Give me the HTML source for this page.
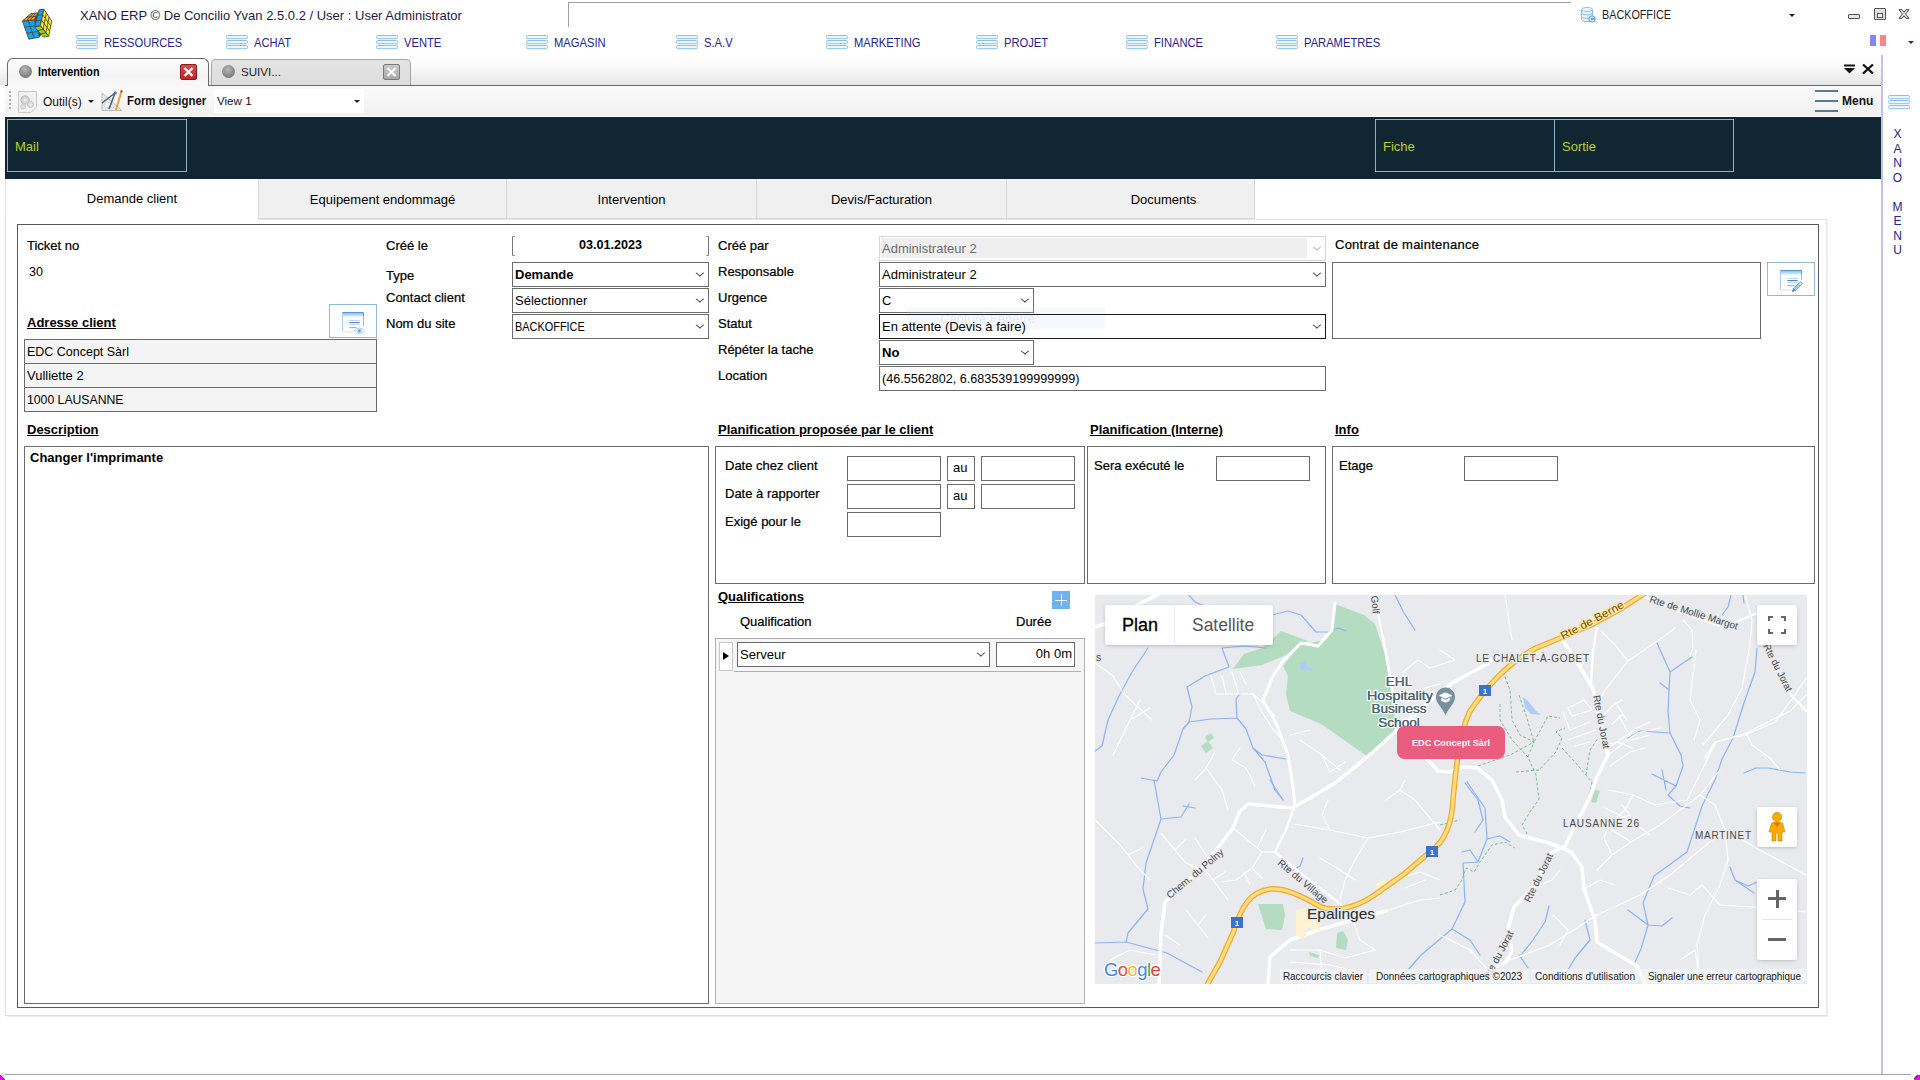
<!DOCTYPE html>
<html lang="fr">
<head>
<meta charset="utf-8">
<title>XANO ERP</title>
<style>
*{box-sizing:border-box;margin:0;padding:0}
html,body{width:1920px;height:1080px;overflow:hidden;background:#fff}
body{font-family:"Liberation Sans",sans-serif;font-size:13px;color:#000;position:relative}
.a{position:absolute;white-space:nowrap}
.t{position:absolute;white-space:nowrap;line-height:16px;height:16px}
.b{font-weight:bold}
.u{text-decoration:underline}
.sb{-webkit-text-stroke:.22px currentColor}
/* menu */
.mi{position:absolute;top:34px;height:17px;white-space:nowrap}
.mi svg{position:absolute;left:0;top:0}
.mi span{position:absolute;left:28px;top:0;line-height:17px;font-size:13.2px;color:#24248c;letter-spacing:-.2px}
/* fields */
.bx{position:absolute;border:1px solid #6b6b6b;background:#fff}
.sel{position:absolute;border:1px solid #6b6b6b;background:#fff;height:25px}
.sel i,.chev{position:absolute;right:5px;top:7px;width:5.8px;height:5.8px;border-right:1.1px solid #333;border-bottom:1.1px solid #333;transform:scaleY(.82) rotate(45deg);transform-origin:center}
.sel span,.bx span{position:absolute;left:2px;top:4px;transform-origin:0 50%;line-height:16px;white-space:nowrap}
.tab{position:absolute;top:179px;height:40px;background:#f0f0f0;border:1px solid #d8d8d8;border-top:none;text-align:center;line-height:42px}
</style>
</head>
<body>
<!-- ===== title bar ===== -->
<div class="a" id="titlebar" style="left:0;top:0;width:1920px;height:58px;background:#fff"></div>
<div class="t" style="left:80px;top:8px;font-size:13px;color:#1b1b46">XANO ERP © De Concilio Yvan 2.5.0.2 / User : User Administrator</div>
<div class="mi" style="left:76px"><svg width="23" height="16" viewBox="0 0 23 16"><g fill="#eef6fd" stroke="#8cc0ec" stroke-width="1"><rect x="0.5" y="1.5" width="21" height="3.2" rx="1.2"/><rect x="0.5" y="6.5" width="21" height="3.2" rx="1.2"/><rect x="0.5" y="11.5" width="21" height="3.2" rx="1.2"/></g></svg><span style="font-size:13px;letter-spacing:0;transform:scaleX(.86);transform-origin:0 0">RESSOURCES</span></div>
<div class="mi" style="left:226px"><svg width="23" height="16" viewBox="0 0 23 16"><g fill="#eef6fd" stroke="#8cc0ec" stroke-width="1"><rect x="0.5" y="1.5" width="21" height="3.2" rx="1.2"/><rect x="0.5" y="6.5" width="21" height="3.2" rx="1.2"/><rect x="0.5" y="11.5" width="21" height="3.2" rx="1.2"/></g></svg><span style="font-size:13px;letter-spacing:0;transform:scaleX(.86);transform-origin:0 0">ACHAT</span></div>
<div class="mi" style="left:376px"><svg width="23" height="16" viewBox="0 0 23 16"><g fill="#eef6fd" stroke="#8cc0ec" stroke-width="1"><rect x="0.5" y="1.5" width="21" height="3.2" rx="1.2"/><rect x="0.5" y="6.5" width="21" height="3.2" rx="1.2"/><rect x="0.5" y="11.5" width="21" height="3.2" rx="1.2"/></g></svg><span style="font-size:13px;letter-spacing:0;transform:scaleX(.86);transform-origin:0 0">VENTE</span></div>
<div class="mi" style="left:526px"><svg width="23" height="16" viewBox="0 0 23 16"><g fill="#eef6fd" stroke="#8cc0ec" stroke-width="1"><rect x="0.5" y="1.5" width="21" height="3.2" rx="1.2"/><rect x="0.5" y="6.5" width="21" height="3.2" rx="1.2"/><rect x="0.5" y="11.5" width="21" height="3.2" rx="1.2"/></g></svg><span style="font-size:13px;letter-spacing:0;transform:scaleX(.86);transform-origin:0 0">MAGASIN</span></div>
<div class="mi" style="left:676px"><svg width="23" height="16" viewBox="0 0 23 16"><g fill="#eef6fd" stroke="#8cc0ec" stroke-width="1"><rect x="0.5" y="1.5" width="21" height="3.2" rx="1.2"/><rect x="0.5" y="6.5" width="21" height="3.2" rx="1.2"/><rect x="0.5" y="11.5" width="21" height="3.2" rx="1.2"/></g></svg><span style="font-size:13px;letter-spacing:0;transform:scaleX(.86);transform-origin:0 0">S.A.V</span></div>
<div class="mi" style="left:826px"><svg width="23" height="16" viewBox="0 0 23 16"><g fill="#eef6fd" stroke="#8cc0ec" stroke-width="1"><rect x="0.5" y="1.5" width="21" height="3.2" rx="1.2"/><rect x="0.5" y="6.5" width="21" height="3.2" rx="1.2"/><rect x="0.5" y="11.5" width="21" height="3.2" rx="1.2"/></g></svg><span style="font-size:13px;letter-spacing:0;transform:scaleX(.86);transform-origin:0 0">MARKETING</span></div>
<div class="mi" style="left:976px"><svg width="23" height="16" viewBox="0 0 23 16"><g fill="#eef6fd" stroke="#8cc0ec" stroke-width="1"><rect x="0.5" y="1.5" width="21" height="3.2" rx="1.2"/><rect x="0.5" y="6.5" width="21" height="3.2" rx="1.2"/><rect x="0.5" y="11.5" width="21" height="3.2" rx="1.2"/></g></svg><span style="font-size:13px;letter-spacing:0;transform:scaleX(.86);transform-origin:0 0">PROJET</span></div>
<div class="mi" style="left:1126px"><svg width="23" height="16" viewBox="0 0 23 16"><g fill="#eef6fd" stroke="#8cc0ec" stroke-width="1"><rect x="0.5" y="1.5" width="21" height="3.2" rx="1.2"/><rect x="0.5" y="6.5" width="21" height="3.2" rx="1.2"/><rect x="0.5" y="11.5" width="21" height="3.2" rx="1.2"/></g></svg><span style="font-size:13px;letter-spacing:0;transform:scaleX(.86);transform-origin:0 0">FINANCE</span></div>
<div class="mi" style="left:1276px"><svg width="23" height="16" viewBox="0 0 23 16"><g fill="#eef6fd" stroke="#8cc0ec" stroke-width="1"><rect x="0.5" y="1.5" width="21" height="3.2" rx="1.2"/><rect x="0.5" y="6.5" width="21" height="3.2" rx="1.2"/><rect x="0.5" y="11.5" width="21" height="3.2" rx="1.2"/></g></svg><span style="font-size:13px;letter-spacing:0;transform:scaleX(.86);transform-origin:0 0">PARAMETRES</span></div>

<!-- cube logo -->
<svg class="a" style="left:14px;top:0px" width="50" height="46" viewBox="0 0 50 46">
 <polygon points="20.0,20.0 23.9,12.8 25.1,10.2 20.9,26.8 27.3,34.9 25.6,37.1" fill="#4a4644"/>
 <polygon points="8.5,21.3 20.0,20.0 25.6,37.1 14.9,39.2" fill="#12a5ee" stroke="#4a4644" stroke-width=".9" stroke-linejoin="round"/>
 <path d="M14.3,20.7 L20.2,38.1 M10.6,27.3 L21.9,25.7 M12.8,33.2 L23.7,31.4 " stroke="#4a4644" stroke-width=".9" fill="none"/>
 <polygon points="17.0,13.6 23.9,12.8 20.0,20.0 8.5,20.9" fill="#ff9a0a" stroke="#4a4644" stroke-width=".9" stroke-linejoin="round"/>
 <path d="M19.3,13.3 L12.4,20.6 M21.6,13.1 L16.2,20.3 M12.8,17.2 L21.9,16.4 " stroke="#4a4644" stroke-width=".9" fill="none"/>
 <polygon points="25.1,9.8 29.8,9.2 26.4,25.6 20.9,26.4" fill="#12a5ee" stroke="#4a4644" stroke-width=".9" stroke-linejoin="round"/>
 <path d="M23.7,15.3 L28.7,14.6 M22.3,20.9 L27.5,20.1 " stroke="#4a4644" stroke-width=".9" fill="none"/>
 <polygon points="29.8,9.2 37.7,20.9 34.7,36.2 26.4,25.6" fill="#fdf020" stroke="#4a4644" stroke-width=".9" stroke-linejoin="round"/>
 <path d="M32.4,13.1 L29.2,29.1 M35.1,17.0 L31.9,32.7 M28.7,14.6 L36.7,26.0 M27.5,20.1 L35.7,31.1 " stroke="#4a4644" stroke-width=".9" fill="none"/>
 <polygon points="20.9,27.3 26.4,26.0 34.7,36.2 29.4,37.1" fill="#9ad616" stroke="#4a4644" stroke-width=".9" stroke-linejoin="round"/>
 <path d="M23.7,30.5 L29.2,29.4 M26.5,33.8 L31.9,32.8 " stroke="#4a4644" stroke-width=".9" fill="none"/>
</svg>

<!-- BACKOFFICE selector -->
<svg class="a" style="left:1580px;top:6px" width="17" height="18" viewBox="0 0 17 18">
 <g fill="#eaf4fd" stroke="#8cc0ec" stroke-width="1">
  <path d="M1.5,3.5 C1.5,0.8 12.5,0.8 12.5,3.5 V13.5 C12.5,16.2 1.5,16.2 1.5,13.5 Z"/>
  <path d="M1.5,3.5 C1.5,6 12.5,6 12.5,3.5 M1.5,7 C1.5,9.5 12.5,9.5 12.5,7 M1.5,10.5 C1.5,13 12.5,13 12.5,10.5" fill="none"/>
 </g>
 <circle cx="12" cy="13" r="3.6" fill="#5aa5e8"/><path d="M13.6,11.8 A2,2 0 1 0 13.8,13.8" stroke="#fff" stroke-width="1.1" fill="none"/>
</svg>
<div class="t" style="left:1602px;top:7px;font-size:13px;color:#1b1b30;transform:scaleX(.83);transform-origin:0 50%">BACKOFFICE</div>
<div class="a" style="left:1789px;top:14px;border:3px solid transparent;border-top:3px solid #222;border-bottom:none"></div>
<!-- window controls -->
<div class="a" style="left:1848px;top:14px;width:12px;height:5px;border:1px solid #555;background:#e6e6e6;border-radius:1px"></div>
<div class="a" style="left:1874px;top:8px;width:12px;height:12px;border:1px solid #555;background:#ddd;border-radius:1px"></div>
<div class="a" style="left:1877px;top:13px;width:6px;height:5px;border:1px solid #555;background:#eee"></div>
<svg class="a" style="left:1898px;top:9px" width="12" height="10" viewBox="0 0 12 10"><path d="M1,.7 H4 L6,3.2 L8,.7 H11 L7.6,5 L11,9.3 H8 L6,6.8 L4,9.3 H1 L4.4,5 Z" fill="#e4e4e4" stroke="#444" stroke-width="1"/></svg>
<!-- flag -->
<div class="a" style="left:1870px;top:35px;width:16px;height:11px;background:linear-gradient(90deg,#8585f5 0 36%,#fdfdfd 36% 64%,#f98686 64% 100%)"></div>
<div class="a" style="left:1908px;top:41px;border:3px solid transparent;border-top:3px solid #24248c;border-bottom:none"></div>
<!-- empty box -->
<div class="a" style="left:568px;top:2px;width:1003px;height:25px;border-left:1px solid #a0a0a0;border-top:1px solid #a0a0a0"></div>

<!-- ===== tab strip ===== -->
<div class="a" style="left:0;top:58px;width:1881px;height:27px;background:linear-gradient(#ffffff 0%,#fbfbfb 30%,#e6e6e6 100%)"></div>
<div class="a" style="left:5px;top:85px;width:1876px;height:1px;background:#6a6a6a"></div>


<!-- doc tabs -->
<div class="a" style="left:7px;top:58px;width:202px;height:28px;border:1px solid #6a6a6a;border-bottom:none;border-radius:6px 6px 0 0;background:linear-gradient(#fdfdfd,#f4f4f4 60%,#f8f8f8)"></div>
<div class="a" style="left:211px;top:59px;width:200px;height:26px;border:1px solid #a5a5a5;border-bottom:none;border-radius:5px 5px 0 0;background:linear-gradient(#e4e4e4,#dcdcdc)"></div>
<div class="a" style="left:19px;top:65px;width:13px;height:13px;border-radius:50%;background:radial-gradient(circle at 45% 35%,#b8b8b8 0,#8a8a8a 55%,#5c5c5c 100%)"></div>
<div class="a" style="left:222px;top:65px;width:13px;height:13px;border-radius:50%;background:radial-gradient(circle at 45% 35%,#b8b8b8 0,#8a8a8a 55%,#5c5c5c 100%)"></div>
<div class="t b" style="left:38px;top:64px;font-size:12px;transform:scaleX(.895);transform-origin:0 50%">Intervention</div>
<div class="t" style="left:241px;top:64px;font-size:11.6px;color:#222">SUIVI...</div>
<div class="a" style="left:180px;top:64px;width:17px;height:16px;border:1px solid #8c1a1a;border-radius:2px;background:linear-gradient(#e04848,#c42424)"></div>
<svg class="a" style="left:183px;top:67px" width="11" height="10" viewBox="0 0 11 10"><path d="M1.5,1 L9.5,9 M9.5,1 L1.5,9" stroke="#fff" stroke-width="2.4"/></svg>
<div class="a" style="left:383px;top:64px;width:17px;height:16px;border:1px solid #7a7a7a;border-radius:2px;background:linear-gradient(#c8c8c8,#a8a8a8)"></div>
<svg class="a" style="left:386px;top:67px" width="11" height="10" viewBox="0 0 11 10"><path d="M1.5,1 L9.5,9 M9.5,1 L1.5,9" stroke="#fff" stroke-width="2.2"/></svg>
<!-- strip right controls -->
<svg class="a" style="left:1844px;top:64px" width="12" height="10" viewBox="0 0 12 10"><rect x="0" y="0.5" width="11" height="2" fill="#111"/><path d="M0,4 H11 L5.5,9.5 Z" fill="#111"/></svg>
<svg class="a" style="left:1862px;top:64px" width="12" height="10" viewBox="0 0 12 10"><path d="M1,0.5 L11,9.5 M11,0.5 L1,9.5" stroke="#111" stroke-width="2.2"/></svg>
<!-- ===== toolbar ===== -->
<div class="a" style="left:5px;top:86px;width:1876px;height:30px;background:linear-gradient(#f9f9f9,#f7f7f7 40%,#f1f1f1)"></div>


<!-- toolbar content -->
<div class="a" style="left:9px;top:91px;width:2px;height:18px;background:repeating-linear-gradient(#b0b0b0 0 2px,transparent 2px 4px)"></div>
<svg class="a" style="left:17px;top:90px" width="22" height="24" viewBox="0 0 22 24">
 <path d="M1.5,1.5 H19.5 V17 L14,22.5 H1.5 Z" fill="#f1f1f1" stroke="#c9c9c9"/>
 <circle cx="8" cy="10" r="4.2" fill="#d4d4d4" stroke="#bcbcbc"/><circle cx="8" cy="10" r="1.6" fill="#eee"/>
 <circle cx="13.5" cy="14.5" r="3" fill="#dcdcdc" stroke="#c4c4c4"/><circle cx="13.5" cy="14.5" r="1.1" fill="#eee"/>
 <circle cx="6" cy="16.5" r="2.4" fill="#e0e0e0" stroke="#c8c8c8"/>
</svg>
<div class="t" style="left:43px;top:94px;font-size:12px;color:#111">Outil(s)</div>
<div class="a" style="left:88px;top:100px;border:3px solid transparent;border-top:3px solid #222;border-bottom:none"></div>
<svg class="a" style="left:100px;top:89px" width="25" height="25" viewBox="0 0 25 25">
 <path d="M2,21.5 H22 L2,4 Z" fill="#e8e8e8" stroke="#bdbdbd"/>
 <path d="M5,18.5 H14 L5,10 Z" fill="#f8f8f8" stroke="#c8c8c8" stroke-width=".7"/>
 <path d="M2,14 L15,4 M15,4 L9,20" stroke="#4e5f74" stroke-width="1.5" fill="none"/>
 <circle cx="15.3" cy="3.8" r="1.5" fill="#3a7bd0"/>
 <path d="M21.5,2 L16,21" stroke="#e8a33a" stroke-width="2"/>
 <path d="M21.8,1.2 L21.2,3.4" stroke="#d04040" stroke-width="2"/>
</svg>
<div class="t b" style="left:127px;top:93px;font-size:12.4px;color:#111;transform:scaleX(.92);transform-origin:0 50%">Form designer</div>
<div class="a" style="left:214px;top:89px;width:150px;height:24px;background:#fff"></div>
<div class="t" style="left:217px;top:93px;font-size:11.6px;color:#111">View 1</div>
<div class="a" style="left:354px;top:100px;border:3px solid transparent;border-top:3px solid #222;border-bottom:none"></div>
<div class="a" style="left:1815px;top:90px;width:23px;height:2px;background:#5b7a90"></div>
<div class="a" style="left:1815px;top:100px;width:23px;height:2px;background:#5b7a90"></div>
<div class="a" style="left:1815px;top:110px;width:23px;height:2px;background:#5b7a90"></div>
<div class="t b" style="left:1842px;top:93px;font-size:12px;color:#111">Menu</div>
<!-- ===== dark band ===== -->
<div class="a" style="left:5px;top:117px;width:1876px;height:62px;background:#102733"></div>


<div class="a" style="left:7px;top:119px;width:180px;height:53px;border:1px solid #8fb2c8"></div>
<div class="a" style="left:1375px;top:119px;width:180px;height:53px;border:1px solid #8fb2c8"></div>
<div class="a" style="left:1554px;top:119px;width:180px;height:53px;border:1px solid #8fb2c8"></div>
<div class="t" style="left:15px;top:139px;color:#bccf2b">Mail</div>
<div class="t" style="left:1383px;top:139px;color:#bccf2b">Fiche</div>
<div class="t" style="left:1562px;top:139px;color:#bccf2b">Sortie</div>

<!-- ===== form tabs ===== -->
<div class="tab" style="left:258px;width:249px">Equipement endommagé</div>
<div class="tab" style="left:506px;width:251px">Intervention</div>
<div class="tab" style="left:756px;width:251px">Devis/Facturation</div>
<div class="tab" style="left:1006px;width:249px;padding-left:66px">Documents</div>
<!-- panel -->
<div class="a" style="left:5px;top:179px;width:1px;height:40px;background:#e2e2e2"></div>
<div class="a" style="left:5px;top:219px;width:1822px;height:797px;border:1px solid #dedede;border-top-color:#e6e6e6"></div>
<div class="a" style="left:6px;top:180px;width:252px;height:41px;background:#fff"></div>
<div class="t" style="left:6px;width:252px;text-align:center;top:191px">Demande client</div>
<div class="a" style="left:1826px;top:221px;width:2px;height:796px;background:linear-gradient(90deg,#e4e4e4,#f4f4f4)"></div><div class="a" style="left:7px;top:1016px;width:1821px;height:1px;background:#efefef"></div>
<div class="a" style="left:17px;top:224px;width:1802px;height:784px;border:1px solid #5a5a5a"></div>
<!-- FORM -->
<div class="t sb" style="left:27px;top:238px;">Ticket no</div>
<div class="t " style="left:29px;top:264px;font-size:12.5px">30</div>
<div class="t b u" style="left:27px;top:315px;">Adresse client</div>
<div class="a" style="left:329px;top:304px;width:48px;height:34px;border:1px solid #92b9dc;background:#fff"></div>
<svg class="a" style="left:341px;top:311px" width="26" height="25" viewBox="0 0 26 25">
 <defs><linearGradient id="hg1" x1="0" y1="0" x2="0" y2="1"><stop offset="0" stop-color="#8cc1f7"/><stop offset=".55" stop-color="#b9dafb"/><stop offset="1" stop-color="#fff"/></linearGradient></defs>
 <rect x="1.5" y="1.5" width="21" height="19.5" fill="#fff"/>
 <rect x="1.5" y="1.5" width="21" height="4.6" fill="url(#hg1)"/>
 <path d="M1.3,1.5 H22.7" stroke="#5c94d6" stroke-width="1.1"/>
 <path d="M1.5,2 V20.5" stroke="#a9cdf2"/>
 <path d="M22.5,2 V5.5" stroke="#5c94d6"/>
 <path d="M8.3,9.5 H18.7 M8.3,13.7 H18.7" stroke="#cdcbfa"/>
 <path d="M8.3,11.6 H18.7" stroke="#2f8fcb" stroke-width="1.1"/>
 <path d="M8.3,16.6 H15.5" stroke="#86c2b4" stroke-width="1.1"/>
 <path d="M5.5,9.5 h1 M5.5,13.7 h1 M5.5,16.6 h1" stroke="#e4e4e4"/><path d="M5.5,11.6 h1" stroke="#a8dcfa"/>
 <path d="M22.5,5.5 V15.5" stroke="#93c4c4"/>
 <path d="M1.8,21 H13" stroke="#e0e0e0"/>
 <path d="M13.2,19.8 Q18.4,14 23.6,19.8 Q18.4,25.4 13.2,19.8 Z" fill="#fff" stroke="#a6cdf4" stroke-width=".9"/>
 <circle cx="18.4" cy="19.8" r="2.5" fill="#b4d6f8"/><circle cx="18.4" cy="19.8" r="1.1" fill="#4a96e2"/>
</svg>
<div class="bx" style="left:24px;top:339px;width:353px;height:25px;background:#f4f4f4;"><span style="left:2px;top:4px;transform:scaleX(.96)">EDC Concept Sàrl</span></div>
<div class="bx" style="left:24px;top:363px;width:353px;height:25px;background:#f4f4f4;"><span style="left:2px;top:4px">Vulliette 2</span></div>
<div class="bx" style="left:24px;top:387px;width:353px;height:25px;background:#f4f4f4;"><span style="left:2px;top:4px;transform:scaleX(.94)">1000 LAUSANNE</span></div>
<div class="t b u" style="left:27px;top:422px;">Description</div>
<div class="bx" style="left:24px;top:446px;width:685px;height:558px;"><span style="font-weight:bold;left:5px;top:3px">Changer l'imprimante</span></div>
<div class="t sb" style="left:386px;top:238px;">Créé le</div>
<div class="t sb" style="left:386px;top:268px;">Type</div>
<div class="t sb" style="left:386px;top:290px;">Contact client</div>
<div class="t sb" style="left:386px;top:316px;">Nom du site</div>
<div class="a" style="left:512px;top:236px;width:197px;height:20px;border-left:1px solid #777;border-right:1px solid #777"></div>
<div class="a" style="left:512px;top:236px;width:3px;height:1px;background:#999"></div><div class="a" style="left:706px;top:236px;width:3px;height:1px;background:#999"></div>
<div class="a" style="left:512px;top:255px;width:3px;height:1px;background:#999"></div><div class="a" style="left:706px;top:255px;width:3px;height:1px;background:#999"></div>
<div class="t b" style="left:512px;width:197px;text-align:center;top:237px;font-size:12.6px">03.01.2023</div>
<div class="sel" style="left:512px;top:262px;width:197px;height:25px;border-color:#6b6b6b;"><span class="b" style="color:#000">Demande</span><i></i></div>
<div class="sel" style="left:512px;top:288px;width:197px;height:25px;border-color:#6b6b6b;"><span style="color:#000">Sélectionner</span><i></i></div>
<div class="sel" style="left:512px;top:314px;width:197px;height:25px;border-color:#6b6b6b;"><span style="color:#000;transform:scaleX(.84)">BACKOFFICE</span><i></i></div>
<div class="t sb" style="left:718px;top:238px;">Créé par</div>
<div class="t sb" style="left:718px;top:264px;">Responsable</div>
<div class="t sb" style="left:718px;top:290px;">Urgence</div>
<div class="t sb" style="left:718px;top:316px;">Statut</div>
<div class="t sb" style="left:718px;top:342px;">Répéter la tache</div>
<div class="t sb" style="left:718px;top:368px;">Location</div>
<div class="sel" style="left:879px;top:236px;width:447px;height:25px;border-color:#d6d6d6"><div class="a" style="left:1px;top:1px;width:426px;height:20px;background:#efefef"></div><span style="color:#6d6d6d">Administrateur 2</span><i style="border-color:#b0b0b0"></i></div>
<div class="sel" style="left:879px;top:262px;width:447px;height:25px;border-color:#6b6b6b;"><span style="color:#000">Administrateur 2</span><i></i></div>
<div class="sel" style="left:879px;top:288px;width:155px;height:25px;border-color:#6b6b6b;"><span style="color:#000">C</span><i></i></div>
<div class="a" style="left:907px;top:307px;width:198px;height:22px;background:rgba(190,215,245,.15)"></div><div class="t" style="left:940px;top:311px;color:rgba(120,140,170,.14)">Capture Fenêtre</div>
<div class="sel" style="left:879px;top:314px;width:447px;height:25px;border-color:#1a1a1a;background:transparent;"><span style="color:#000">En attente (Devis à faire)</span><i></i></div>
<div class="sel" style="left:879px;top:340px;width:155px;height:25px;border-color:#6b6b6b;"><span class="b" style="color:#000">No</span><i></i></div>
<div class="bx" style="left:879px;top:366px;width:447px;height:25px;"><span style="top:4px;font-size:12.6px">(46.5562802, 6.683539199999999)</span></div>
<div class="t sb" style="left:1335px;top:237px;letter-spacing:.25px">Contrat de maintenance</div>
<div class="bx" style="left:1332px;top:262px;width:429px;height:77px;"></div>
<div class="a" style="left:1767px;top:262px;width:48px;height:34px;border:1px solid #92b9dc;background:#fff"></div>
<svg class="a" style="left:1779px;top:269px" width="26" height="25" viewBox="0 0 26 25">
 <defs><linearGradient id="hg2" x1="0" y1="0" x2="0" y2="1"><stop offset="0" stop-color="#8cc1f7"/><stop offset=".55" stop-color="#b9dafb"/><stop offset="1" stop-color="#fff"/></linearGradient></defs>
 <rect x="1.5" y="1.5" width="21" height="19.5" fill="#fff"/>
 <rect x="1.5" y="1.5" width="21" height="4.6" fill="url(#hg2)"/>
 <path d="M1.3,1.5 H22.7" stroke="#5c94d6" stroke-width="1.1"/>
 <path d="M1.5,2 V20.5" stroke="#a9cdf2"/>
 <path d="M22.5,2 V5.5" stroke="#5c94d6"/>
 <path d="M8.3,9.5 H18.7 M8.3,13.7 H18.7" stroke="#cdcbfa"/>
 <path d="M8.3,11.6 H18.7" stroke="#2f8fcb" stroke-width="1.1"/>
 <path d="M8.3,16.6 H15.5" stroke="#86c2b4" stroke-width="1.1"/>
 <path d="M5.5,9.5 h1 M5.5,13.7 h1 M5.5,16.6 h1" stroke="#e4e4e4"/><path d="M5.5,11.6 h1" stroke="#a8dcfa"/>
 <path d="M22.5,5.5 V11" stroke="#93c4c4"/>
 <path d="M1.8,21 H12.5" stroke="#e0e0e0"/>
 <path d="M13.2,22.6 L14.6,19.2 L21.6,12.6 L23.6,14.6 L16.6,21.6 Z" fill="#a9cbf3" stroke="#4f8ad4" stroke-width=".7"/>
 <path d="M13.2,22.6 L14.6,19.2 L16.6,21.6 Z" fill="#4f8ad4"/>
 <path d="M16,20.6 L22.8,14" stroke="#8fc9bc" stroke-width=".8"/>
 <ellipse cx="21.3" cy="14.8" rx="1" ry=".6" transform="rotate(-45 21.3 14.8)" fill="#fff"/>
</svg>
<div class="t b u" style="left:718px;top:422px;">Planification proposée par le client</div>
<div class="bx" style="left:715px;top:446px;width:370px;height:138px;"></div>
<div class="t sb" style="left:725px;top:458px;">Date chez client</div>
<div class="t sb" style="left:725px;top:486px;">Date à rapporter</div>
<div class="t sb" style="left:725px;top:514px;">Exigé pour le</div>
<div class="bx" style="left:847px;top:456px;width:94px;height:25px;"></div>
<div class="bx" style="left:947px;top:456px;width:28px;height:25px;"><span style="left:5px;top:3px">au</span></div>
<div class="bx" style="left:981px;top:456px;width:94px;height:25px;"></div>
<div class="bx" style="left:847px;top:484px;width:94px;height:25px;"></div>
<div class="bx" style="left:947px;top:484px;width:28px;height:25px;"><span style="left:5px;top:3px">au</span></div>
<div class="bx" style="left:981px;top:484px;width:94px;height:25px;"></div>
<div class="bx" style="left:847px;top:512px;width:94px;height:25px;"></div>
<div class="t b u" style="left:1090px;top:422px;">Planification (Interne)</div>
<div class="bx" style="left:1087px;top:446px;width:239px;height:138px;"></div>
<div class="t sb" style="left:1094px;top:458px;">Sera exécuté le</div>
<div class="bx" style="left:1216px;top:456px;width:94px;height:25px;"></div>
<div class="t b u" style="left:1335px;top:422px;">Info</div>
<div class="bx" style="left:1332px;top:446px;width:483px;height:138px;"></div>
<div class="t sb" style="left:1339px;top:458px;">Etage</div>
<div class="bx" style="left:1464px;top:456px;width:94px;height:25px;"></div>
<div class="t b u" style="left:718px;top:589px;">Qualifications</div>
<div class="a" style="left:1052px;top:591px;width:18px;height:18px;background:#6db3f2"></div>
<div class="a" style="left:1055px;top:599.5px;width:12px;height:1px;background:#fff"></div><div class="a" style="left:1060.5px;top:594px;width:1px;height:12px;background:#fff"></div>
<div class="t " style="left:740px;top:614px;-webkit-text-stroke:.22px #000">Qualification</div>
<div class="t " style="left:1016px;top:614px;-webkit-text-stroke:.22px #000">Durée</div>
<div class="bx" style="left:715px;top:638px;width:370px;height:366px;background:#f5f5f5;border-color:#b0b0b4"></div>
<div class="a" style="left:719px;top:642px;width:14px;height:29px;background:#fff;border:1px solid #c8c8c8"></div>
<div class="a" style="left:723px;top:652px;border:4.5px solid transparent;border-left:6px solid #000;border-right:none"></div>
<div class="a" style="left:734px;top:671px;width:347px;height:1px;background:#b0b0b0"></div>
<div class="sel" style="left:737px;top:642px;width:253px;height:25px;border-color:#6b6b6b;"><span style="color:#000">Serveur</span><i></i></div>
<div class="bx" style="left:996px;top:642px;width:79px;height:25px;"><span style="left:auto;right:2px;top:3px">0h 0m</span></div>
<!-- MAP -->
<svg class="a" style="left:1095px;top:595px" width="712" height="389" viewBox="1095 595 712 389" font-family="Liberation Sans, sans-serif">
<rect x="1095" y="595" width="712" height="389" fill="#e8eaed"/>
<!-- green areas -->
<g fill="#b4dcc0">
<path d="M1335,604 L1364,615 L1375,624 L1384,652 L1391,689 L1396,730 L1367,756 L1321,724 L1290,711 L1286,694 L1288,676 L1283,666 L1299,646 L1327,639 L1334,619 Z"/>
<path d="M1281,631 L1308,641 L1299,646 L1286,655 L1262,665 L1233,669 L1244,654 L1262,648 L1277,635 Z"/>
<path d="M1205,737 l6,-4 l3,5 l-6,4 z M1201,746 l7,-5 l5,7 l-7,5 z"/>
<path d="M1258,904 L1283,904 L1285,915 L1282,930 L1266,929 Z"/>
<path d="M1337,933 L1343,931 L1348,940 L1346,950 L1336,948 Z"/>
<path d="M1309,952 L1319,955 L1318,958 L1310,956 Z"/>
<path d="M1595,790 l5,1 l-4,12 l-5,-1 z"/>
</g>
<!-- lakes -->
<g fill="#aecbfa"><path d="M1301,663 l4,-1 l2,4 l6,2 l-2,3 l-5,-2 l-4,3 l-2,-4 z"/><path d="M1523,697 l5,4 l8,10 l5,4 l-10,-1 l-6,-6 z"/></g>
<!-- streams -->
<g fill="none" stroke="#8ab4f8" stroke-width="1.2" stroke-linecap="round" stroke-linejoin="round">
<path d="M1189,595 L1195,602 L1202,605"/>
<path d="M1272,615 L1288,611 L1301,615 L1316,632 L1329,632 L1338,628 L1346,631"/>
<path d="M1266,648 L1245,646 L1222,648 L1229,667 L1205,676 L1187,687 L1192,707 L1189,722 L1183,729 L1174,755 L1161,772 L1157,781 L1141,778"/>
<path d="M1189,722 L1211,719 L1237,718 L1246,729 L1253,748 L1262,755 L1286,759 M1237,718 L1236,699 L1240,694 M1253,748 L1265,762 L1275,790 L1283,800"/>
<path d="M1148,648 L1132,672 L1119,696 L1108,720 L1102,746 L1095,751"/>
<path d="M1395,595 L1404,613 L1415,630"/>
<path d="M1154,780 L1161,819 L1146,863 L1143,889 L1148,909 L1128,933 L1126,942 L1095,943 M1126,942 L1167,953 L1202,972 M1161,819 L1181,817 L1189,804 M1183,806 L1195,808"/>
<path d="M1270,780 L1283,800 M1290,872 L1300,866 L1303,858"/>
<path d="M1467,782 L1485,808 L1487,839 L1500,836 L1510,842 M1487,839 L1478,862 L1463,863 L1465,902 L1452,929 L1421,955 L1408,970 M1478,862 L1470,850 L1462,852 M1452,929 L1470,940 L1480,955"/>
<path d="M1657,643 L1670,672 L1668,711 L1670,733 L1681,755 L1683,766 L1676,786 L1668,795 L1680,806 L1690,808 M1670,672 L1692,657 M1669,690 L1660,683 M1670,733 L1640,731 L1628,738 M1676,786 L1652,774 M1666,790 L1662,770"/>
<path d="M1731,595 L1728,607 L1722,615 M1743,595 L1744,603"/>
<path d="M1757,648 L1755,672 L1744,703 L1733,738 L1722,759 L1715,780 L1702,806 L1687,852 L1654,876 L1643,903 L1648,925 L1641,949 L1635,962 M1648,925 L1662,926 L1672,918 M1648,925 L1628,910"/>
<path d="M1744,773 L1756,768 L1768,768 L1790,772 L1805,773"/>
<path d="M1730,867 L1735,880 L1748,886 L1762,880 M1735,880 L1754,893"/>
<path d="M1549,906 L1545,922 L1533,940 L1521,955 M1519,955 L1528,968 M1585,920 L1590,940 L1575,958 L1565,975"/>
<path d="M1465,783 L1478,800 L1483,820 L1475,832"/>
</g>
<!-- green trails -->
<g fill="none" stroke="#7cc28f" stroke-width="1" stroke-dasharray="3 2">
<path d="M1500,704 L1500,720 L1512,740 L1528,757 L1536,775 L1539,799 L1530,812 L1522,825 L1528,835"/>
<path d="M1503,672 L1510,690 L1512,720 L1520,735 L1534,742 L1528,757 M1519,695 L1526,715 L1534,742 L1548,716 L1560,718"/>
<path d="M1478,766 L1510,755 L1534,742 M1516,772 L1539,770 L1556,752 L1562,738 L1556,732 L1565,728"/>
<path d="M1562,748 L1575,762 L1586,775 L1592,782 L1588,800 M1586,775 L1590,750 L1598,738"/>
<path d="M1440,825 L1460,820 M1440,895 L1455,890 L1462,880 L1466,868 L1474,872 L1480,862 L1492,845 L1505,842 L1515,848"/>
</g>
<!-- thin white roads -->
<g fill="none" stroke="#fff" stroke-width="1.2" stroke-linecap="round" stroke-linejoin="round">
<path d="M1095,663 L1113,676 L1124,694 L1152,720 M1113,755 L1130,720 L1140,700 M1130,720 L1150,708"/>
<path d="M1211,676 L1216,694 L1253,694 L1262,702 M1222,676 L1226,693 M1232,672 L1238,692 M1253,694 L1262,712 L1272,728 L1284,742 M1240,672 L1246,684"/>
<path d="M1195,780 L1206,768 L1215,752 M1206,768 L1222,790 L1228,810 M1240,748 L1232,760 L1246,768 L1255,786 M1262,702 L1275,716"/>
<path d="M1300,740 L1322,755 L1340,770 M1322,755 L1330,772 L1345,762 M1290,735 L1310,730"/>
<path d="M1397,711 L1410,700 L1425,688 L1440,684 M1430,668 L1455,660 L1440,650 M1403,672 L1418,660 L1430,668"/>
<path d="M1505,595 L1512,640 M1593,652 L1580,667 M1602,632 L1615,645 L1628,661 L1663,637 L1675,628 M1628,661 L1605,690 L1600,700 M1619,716 L1630,736 M1612,724 L1622,715"/>
<path d="M1563,712 L1570,730 L1590,722 M1568,740 L1596,730 M1572,716 L1592,710 L1584,700 L1568,708 Z M1575,746 L1590,742"/>
<path d="M1608,755 L1637,733 L1660,728 M1610,766 L1630,752 L1645,748"/>
<path d="M1694,786 L1716,742 L1746,733 L1790,711 L1806,695 M1716,742 L1706,760 M1746,733 L1752,745 L1770,758 L1780,770"/>
<path d="M1764,643 L1775,640 L1790,630 M1696,650 L1690,700 L1700,720 L1694,740"/>
<path d="M1608,790 L1633,795 L1655,805 L1687,800 L1694,786 M1633,795 L1625,810 L1612,822 M1605,808 L1630,820 L1650,835"/>
<path d="M1597,870 L1612,855 L1631,842 L1660,825 L1700,795 L1720,770 M1612,855 L1604,838 L1610,822 L1630,815 L1622,805 M1631,842 L1612,830"/>
<path d="M1597,915 L1640,895 L1670,875 L1700,850 L1725,830 M1553,915 L1568,930 L1560,945 M1668,888 L1690,895 L1702,885 L1720,905 L1770,908 L1806,912"/>
<path d="M1725,830 L1728,860 L1720,885 L1705,915 L1697,945 L1700,983 M1700,983 L1695,950 L1680,960 M1725,830 L1715,805 L1700,795 M1725,830 L1760,850 L1806,875"/>
<path d="M1510,960 L1550,945 L1597,915 M1440,935 L1470,950 L1490,972"/>
<path d="M1161,833 L1175,850 L1185,862 L1200,870 M1175,850 L1185,840 M1195,838 L1208,858 M1203,867 L1213,880 L1228,900 M1213,880 L1225,872"/>
<path d="M1233,828 L1262,852 L1275,852 M1262,852 L1252,868 L1236,880 L1222,882 M1252,868 L1262,878 M1244,873 L1250,884 M1266,830 L1258,846"/>
<path d="M1294,824 L1330,830 L1368,838 L1400,832 L1440,822 M1368,838 L1355,860 L1345,880 L1340,900 M1330,830 L1322,815 L1328,800"/>
<path d="M1386,800 L1400,790 L1415,800 L1440,830 M1400,790 L1405,780 M1320,858 L1340,870 L1355,880"/>
<path d="M1395,880 L1420,872 L1440,880 M1405,888 L1425,880 M1386,911 L1420,900 L1440,898 M1353,920 L1360,940 L1375,950"/>
<path d="M1290,950 L1320,950 L1345,958 L1375,950 M1290,962 L1330,965 L1370,975 M1320,950 L1322,975"/>
<path d="M1095,820 L1120,845 L1140,870 L1150,880 M1128,855 L1142,848 M1110,960 L1130,950 L1155,955"/>
<path d="M1186,910 L1198,925 L1208,938 M1198,925 L1206,915 M1165,935 L1180,945"/>
<path d="M1540,885 L1552,880 L1560,870 M1584,889 L1600,880 L1615,885"/>
</g>
<path fill="none" stroke="#fff" stroke-width="1.2" stroke-linecap="round" stroke-linejoin="round" d="M1611,746 L1637,728 L1650,722 M1703,745 L1728,715 L1742,688 L1750,645 L1752,620 L1745,595 M1705,758 L1715,742 L1745,735 L1775,722 L1795,695 L1806,678 M1683,620 L1692,630 L1693,648 L1690,655"/>
<path fill="none" stroke="#fff" stroke-width="1.2" stroke-linecap="round" stroke-linejoin="round" d="M1597,722 L1612,706 L1622,700 M1617,705 L1627,720 M1632,740 L1650,735 M1605,745 L1618,742 L1632,748"/>
<!-- medium white roads -->
<g fill="none" stroke="#fff" stroke-width="2.4" stroke-linecap="round" stroke-linejoin="round">
<path d="M1375,595 L1380,624 L1386,652 L1391,685 L1397,711"/>
<path d="M1597,626 L1593,652 L1591,685"/>
<path d="M1642,596 L1680,612 L1724,627 L1755,614 L1770,608"/>
<path d="M1764,643 L1790,694 L1806,711"/>
<path d="M1294,808 L1286,830 L1275,852 L1299,872 L1338,902 L1348,912"/>
</g>
<!-- thick white roads -->
<g fill="none" stroke="#fff" stroke-width="3.6" stroke-linecap="round" stroke-linejoin="round">
<path d="M1095,627 L1108,623 L1139,604 L1157,595"/>
<path d="M1335,603 L1332,630 L1318,646 L1301,643 L1283,661 L1272,678 L1263,700 L1277,725 L1288,755 L1293,787 L1295,806" stroke-width="3"/>
<path d="M1159,984 L1161,933 L1165,902 L1203,867 L1233,828 L1240,811 L1248,804 L1270,806 L1292,808 L1310,798 L1335,783 L1355,767 L1372,753 L1397,730 L1428,703 L1452,683 L1485,665 L1500,654"/>
<path d="M1562,639 L1580,667 L1593,689 L1600,722 L1608,755 L1597,777 L1589,799 L1576,824 L1565,846 L1549,854 L1536,885 L1514,907 L1508,929 L1512,951 L1506,962 L1484,973"/>
<path d="M1425,757 L1438,771 L1450,772 L1463,767 L1477,768 L1492,780 L1502,800 L1505,817 L1519,835 L1549,843 L1571,852 L1582,867 L1584,889 L1595,920 L1597,942 L1637,966 L1645,984"/>
<path d="M1268,984 L1270,957 L1290,940 L1321,929 L1353,920 L1386,911"/>
</g>
<!-- Epalinges yellow blocks -->
<g fill="#fdf3d2"><path d="M1296,910 l9,-2 l3,10 l14,4 l-2,8 l-12,-2 l-3,10 l-9,-2 z"/><path d="M1375,885 l8,-6 l6,6 l-8,6 z"/></g>
<!-- highway -->
<path id="hw" d="M1645,593 L1622,608 L1593,624 L1558,639 L1536,648 C1506,664 1486,688 1470,711 C1459,735 1457,760 1453,799 C1452,830 1440,845 1430,852 L1404,874 L1373,896 C1355,908 1335,912 1321,907 C1300,895 1285,888 1270,889 C1250,892 1242,905 1233,933 L1220,962 L1207,985" fill="none" stroke="#f2a92c" stroke-width="5.6"/>
<path d="M1645,593 L1622,608 L1593,624 L1558,639 L1536,648 C1506,664 1486,688 1470,711 C1459,735 1457,760 1453,799 C1452,830 1440,845 1430,852 L1404,874 L1373,896 C1355,908 1335,912 1321,907 C1300,895 1285,888 1270,889 C1250,892 1242,905 1233,933 L1220,962 L1207,985" fill="none" stroke="#fcdc7e" stroke-width="3.2"/>
<!-- shields -->
<g font-size="8" font-weight="bold" fill="#fff" text-anchor="middle">
<rect x="1479" y="685" width="12" height="11" fill="#3a74c8"/><text x="1485" y="694">1</text>
<rect x="1426" y="846" width="12" height="11" fill="#3a74c8"/><text x="1432" y="855">1</text>
<rect x="1231" y="917" width="12" height="11" fill="#3a74c8"/><text x="1237" y="926">1</text>
</g>
<!-- labels -->
<g font-size="10" fill="#4a4a4a" stroke="#e8eaed" stroke-width="2.5" paint-order="stroke" stroke-linejoin="round">
<text transform="translate(1371,596) rotate(84)" textLength="18" lengthAdjust="spacingAndGlyphs">Golf</text>
<text transform="translate(1649,602) rotate(17.5)" textLength="92" lengthAdjust="spacingAndGlyphs">Rte de Mollie Margot</text>
<text transform="translate(1593,696) rotate(79)" textLength="54" lengthAdjust="spacingAndGlyphs">Rte du Jorat</text>
<text transform="translate(1763,646) rotate(63)" textLength="52" lengthAdjust="spacingAndGlyphs">Rte du Jorat</text>
<text transform="translate(1530,903) rotate(-64)" textLength="53" lengthAdjust="spacingAndGlyphs">Rte du Jorat</text>
<text transform="translate(1489,980) rotate(-62)" textLength="53" lengthAdjust="spacingAndGlyphs">Rte du Jorat</text>
<text transform="translate(1170,899) rotate(-40)" textLength="71" lengthAdjust="spacingAndGlyphs">Chem. du Polny</text>
<text transform="translate(1277,864) rotate(40)" textLength="62" lengthAdjust="spacingAndGlyphs">Rte du Village</text>
<text x="1096" y="661" font-size="10.5">s</text>
<text x="1476" y="662" textLength="113" lengthAdjust="spacing">LE CHALET-À-GOBET</text>
<text x="1563" y="827" textLength="76" lengthAdjust="spacing">LAUSANNE 26</text>
<text x="1695" y="839" textLength="56" lengthAdjust="spacing">MARTINET</text>
<text x="1307" y="918.6" font-size="15.5" fill="#2a2a2a">Epalinges</text>
</g>
<text transform="translate(1563,640) rotate(-28)" font-size="11" fill="#7a4a00" stroke="#fde9a8" stroke-width="2.5" paint-order="stroke" textLength="70" lengthAdjust="spacingAndGlyphs">Rte de Berne</text>
<g font-size="13.6" fill="#4d6673" stroke="#fff" stroke-width="2.6" paint-order="stroke" stroke-linejoin="round" text-anchor="middle">
<text x="1399" y="685.8">EHL</text><text x="1400" y="699.6" textLength="66" lengthAdjust="spacingAndGlyphs">Hospitality</text><text x="1399" y="713.4">Business</text><text x="1399" y="727">School</text>
</g>
<g font-size="13.6" fill="#4d6673" stroke="#4d6673" stroke-width=".15" text-anchor="middle">
<text x="1399" y="685.8">EHL</text><text x="1400" y="699.6" textLength="66" lengthAdjust="spacingAndGlyphs">Hospitality</text><text x="1399" y="713.4">Business</text><text x="1399" y="727">School</text>
</g>
<!-- school pin -->
<path d="M1445.5,687 a10,10 0 0 1 10,10 c0,7 -7,11 -10,19.5 c-3,-8.5 -10,-12.5 -10,-19.5 a10,10 0 0 1 10,-10 z" fill="#78909c" stroke="#e8eaed" stroke-width="1"/>
<path d="M1439,695.5 l6.5,-3 l6.5,3 l-6.5,3 z M1441.5,698 v2.8 l4,1.8 l4,-1.8 v-2.8 l-4,1.9 z M1451,696 v4" fill="#fff" stroke="#fff" stroke-width=".4"/>
<!-- pink label -->
<rect x="1397" y="726" width="108" height="33" rx="7.5" fill="#e9587a" fill-opacity=".97"/>
<text x="1451" y="746" font-size="9.4" font-weight="bold" fill="#fff" text-anchor="middle" textLength="78" lengthAdjust="spacingAndGlyphs">EDC Concept Sàrl</text>
<!-- footer -->
<g fill="#f4f5f6" opacity=".8"><rect x="1280" y="969" width="86" height="14"/><rect x="1369" y="969" width="160" height="14"/><rect x="1531" y="969" width="107" height="14"/><rect x="1641" y="969" width="165" height="14"/></g>
<g font-size="10" fill="#222">
<text x="1283" y="980" textLength="80" lengthAdjust="spacingAndGlyphs">Raccourcis clavier</text>
<text x="1376" y="980" textLength="146" lengthAdjust="spacingAndGlyphs">Données cartographiques ©2023</text>
<text x="1535" y="980" textLength="100" lengthAdjust="spacingAndGlyphs">Conditions d'utilisation</text>
<text x="1648" y="980" textLength="153" lengthAdjust="spacingAndGlyphs">Signaler une erreur cartographique</text>
</g>
<!-- Google logo -->
<g font-size="18.5" stroke="#fff" stroke-width="2.4" paint-order="stroke" stroke-linejoin="round" letter-spacing="-.6"><text x="1104" y="975.6"><tspan fill="#4285f4">G</tspan><tspan fill="#ea4335">o</tspan><tspan fill="#fbbc05">o</tspan><tspan fill="#4285f4">g</tspan><tspan fill="#34a853">l</tspan><tspan fill="#ea4335">e</tspan></text></g>
</svg>
<!-- map controls -->
<div class="a" style="left:1105px;top:605px;width:168px;height:40px;background:#fff;border-radius:2px;box-shadow:0 1px 4px -1px rgba(0,0,0,.3)"></div>
<div class="a" style="left:1174px;top:605px;width:1px;height:40px;background:#eee"></div>
<div class="t" style="left:1122px;top:614px;font-size:18px;line-height:22px;height:22px;color:#000;-webkit-text-stroke:.3px #000">Plan</div>
<div class="t" style="left:1192px;top:614px;font-size:18px;line-height:22px;height:22px;color:#565656;transform:scaleX(.97);transform-origin:0 50%">Satellite</div>
<div class="a" style="left:1757px;top:605px;width:40px;height:40px;background:#fff;border-radius:2px;box-shadow:0 1px 4px -1px rgba(0,0,0,.3)"></div>
<svg class="a" style="left:1768px;top:616px" width="18" height="18" viewBox="0 0 18 18"><path d="M0,5 V0 H5 V2 H2 V5 Z M13,0 H18 V5 H16 V2 H13 Z M0,13 H2 V16 H5 V18 H0 Z M16,13 H18 V18 H13 V16 H16 Z" fill="#666"/></svg>
<div class="a" style="left:1757px;top:807px;width:40px;height:40px;background:#fff;border-radius:2px;box-shadow:0 1px 4px -1px rgba(0,0,0,.3)"></div>
<svg class="a" style="left:1766px;top:811px" width="22" height="32" viewBox="0 0 22 32"><circle cx="11" cy="6" r="4.6" fill="#f9ab00" stroke="#c98500" stroke-width=".6"/><path d="M5.5,12 Q11,10.5 16.5,12 L19,21 H16 V30 H12 V22 H10 V30 H6 V21 H3 Z" fill="#f9ab00" stroke="#c98500" stroke-width=".6"/><path d="M7.5,11.5 L11,16 L14.5,11.5 Z" fill="#e37400"/></svg>
<div class="a" style="left:1757px;top:879px;width:40px;height:81px;background:#fff;border-radius:2px;box-shadow:0 1px 4px -1px rgba(0,0,0,.3)"></div>
<div class="a" style="left:1762px;top:919px;width:30px;height:1px;background:#e6e6e6"></div>
<div class="a" style="left:1768px;top:897px;width:18px;height:3px;background:#666"></div><div class="a" style="left:1775.5px;top:889.5px;width:3px;height:18px;background:#666"></div>
<div class="a" style="left:1768px;top:938px;width:18px;height:3px;background:#666"></div>
<!-- /MAP -->
<!-- ===== right side panel ===== -->
<div class="a" style="left:1881px;top:55px;width:2px;height:1019px;background:#bfbff9"></div>

<svg class="a" style="left:1888px;top:94px" width="23" height="16" viewBox="0 0 23 16"><g fill="#eef6fd" stroke="#8cc0ec" stroke-width="1"><rect x="0.5" y="1.5" width="21" height="3.2" rx="1.2"/><rect x="0.5" y="6.5" width="21" height="3.2" rx="1.2"/><rect x="0.5" y="11.5" width="21" height="3.2" rx="1.2"/></g></svg>
<div class="t" style="left:1889px;width:17px;text-align:center;top:126px;font-size:12px;color:#24248c">X</div>
<div class="t" style="left:1889px;width:17px;text-align:center;top:141px;font-size:12px;color:#24248c">A</div>
<div class="t" style="left:1889px;width:17px;text-align:center;top:155px;font-size:12px;color:#24248c">N</div>
<div class="t" style="left:1889px;width:17px;text-align:center;top:170px;font-size:12px;color:#24248c">O</div>
<div class="t" style="left:1889px;width:17px;text-align:center;top:199px;font-size:12px;color:#24248c">M</div>
<div class="t" style="left:1889px;width:17px;text-align:center;top:213px;font-size:12px;color:#24248c">E</div>
<div class="t" style="left:1889px;width:17px;text-align:center;top:228px;font-size:12px;color:#24248c">N</div>
<div class="t" style="left:1889px;width:17px;text-align:center;top:242px;font-size:12px;color:#24248c">U</div>
<!-- bottom line -->
<div class="a" style="left:5px;top:1074px;width:1906px;height:1px;background:#a4a4a4"></div>
<svg class="a" style="left:0;top:1074px" width="6" height="6" viewBox="0 0 6 6"><path d="M0,1 H5 V6 Z" fill="#cfe0f7"/><path d="M0,1 L5,6 H0 Z" fill="#ff00ff"/><path d="M0,1 L5,6" stroke="#3a4a5a" stroke-width="1"/></svg>
<svg class="a" style="left:1914px;top:1074px" width="6" height="6" viewBox="0 0 6 6"><path d="M3,1 H6 V6 H0 Z" fill="#ff00ff"/><path d="M0,5 L4,1" stroke="#3a4a6a" stroke-width="1.4"/></svg>
</body>
</html>
